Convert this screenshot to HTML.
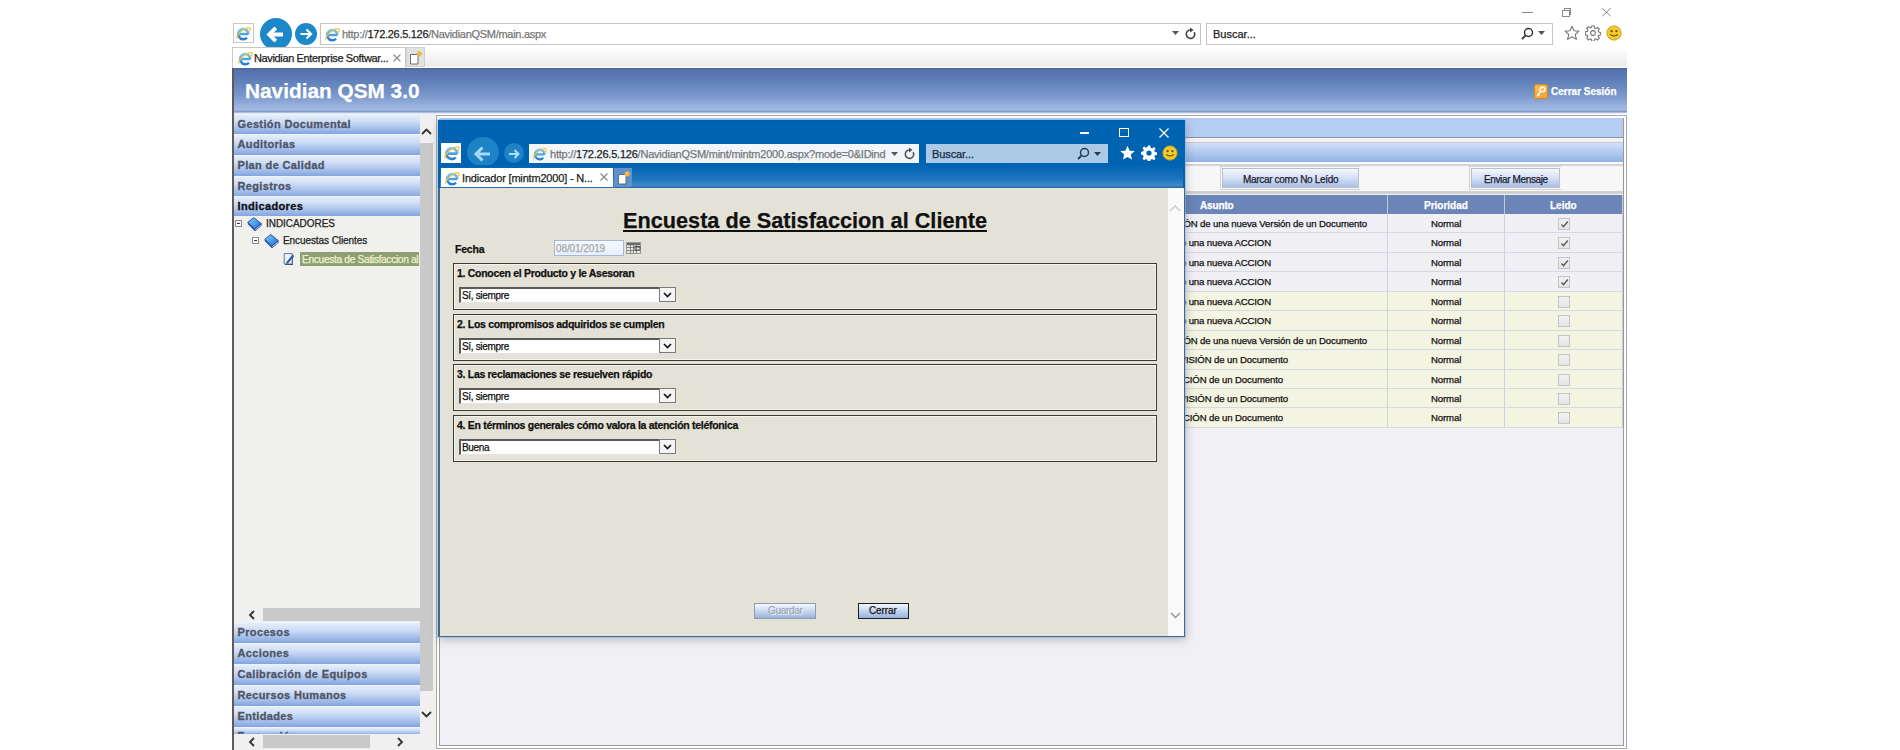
<!DOCTYPE html>
<html><head><meta charset="utf-8">
<style>
*{box-sizing:border-box;margin:0;padding:0}
html,body{width:1900px;height:750px;overflow:hidden;background:#fff;font-family:"Liberation Sans",sans-serif;position:relative}
.a{position:absolute}
.t{position:absolute;white-space:nowrap;line-height:1;-webkit-text-stroke:.25px currentColor}
/* outer chrome */
#chrome{left:232px;top:0;width:1395px;height:68px;background:#fff}
.circ{position:absolute;border-radius:50%;background:#1c87c9}
.box{position:absolute;border:1px solid #c8c8c8;background:#fff}
/* header */
#hdr{left:232px;top:68px;width:1395px;height:46px;background:linear-gradient(#4f638c 0px,#5571b0 2px,#5f7fb8 12px,#7594c8 26px,#a4bae6 42px,#7a92bc 44px,#e2eaf8 45px)}
/* sidebar */
#side{left:232px;top:114px;width:204px;height:636px;background:#f0f0ec}
.acc{position:absolute;left:2px;width:185.5px;height:21px;background:linear-gradient(#e6eefb 0%,#cddcf6 35%,#a6c0ec 70%,#83a4dc 100%);border-top:1px solid #eef3fc;font-weight:bold;font-size:11px;color:#4f5566;padding:3px 0 0 3.5px;letter-spacing:.36px;-webkit-text-stroke:.3px currentColor}
/* main */
#main{left:436px;top:115px;width:1191px;height:634px;border:1px solid #a8a8a8;background:#fff}
#mainin{left:2px;top:2px;width:1185px;height:628px;border:1px solid #999;background:#f1f1f5}
/* popup */
#pop{left:438px;top:120px;width:747px;height:517px;background:#43688f;box-shadow:0 0 0 1px rgba(140,185,230,.55),1px 3px 9px rgba(40,40,60,.28)}
</style></head>
<body>
<!-- outer IE chrome -->

<div id="chrome" class="a">
  <!-- window controls -->
  <div class="a" style="left:1290px;top:12px;width:11px;height:1px;background:#8a8a8a"></div>
  <div class="a" style="left:1331.5px;top:8px;width:7.5px;height:7px;border:1px solid #888"></div>
  <div class="a" style="left:1330px;top:9.5px;width:7.5px;height:7px;border:1px solid #888;background:#fff"></div>
  <svg class="a" style="left:1370px;top:8px" width="9" height="8.5" viewBox="0 0 9 8.5"><path d="M.3 .3l8.4 7.9M8.7 .3L.3 8.2" stroke="#888" stroke-width="1"/></svg>
  <!-- ie box -->
  <div class="box" style="left:1px;top:23px;width:21px;height:20px"></div>
  <svg class="a" style="left:3px;top:25px" width="16" height="16" viewBox="0 0 16 16"><defs><linearGradient id="ieg1" x1="0" y1="0" x2="0" y2="1"><stop offset="0" stop-color="#74c4f6"/><stop offset="1" stop-color="#2a7ed0"/></linearGradient></defs>
   <path d="M3.2 9H13.4M13.4 9A5.1 5.1 0 1 0 12 12.6" fill="none" stroke="url(#ieg1)" stroke-width="2.5"/>
   <path d="M2.2 13.6C0.6 12.2 3.5 7.6 8.2 4.8C11.4 2.9 14.2 2.2 15 3.2C15.6 4 14.8 5.6 13.2 7.2" fill="none" stroke="#f0c43a" stroke-width="1.2"/></svg>
  <!-- back/fwd -->
  <div class="circ" style="left:27.5px;top:18px;width:32px;height:32px"></div>
  <svg class="a" style="left:27px;top:17.5px" width="33" height="33" viewBox="0 0 33 33"><path d="M9.5 16.5h14.5M16.8 9.8l-6.7 6.7 6.7 6.7" fill="none" stroke="#fff" stroke-width="3.8"/></svg>
  <div class="circ" style="left:63px;top:23px;width:22px;height:22px"></div>
  <svg class="a" style="left:63px;top:23px" width="22" height="22" viewBox="0 0 22 22"><path d="M5.5 11h10.5M11.5 6.5l4.5 4.5-4.5 4.5" fill="none" stroke="#fff" stroke-width="2.2"/></svg>
  <!-- address -->
  <div class="box" style="left:88px;top:23px;width:881px;height:22px;border-color:#c4c4c4"></div>
  <svg class="a" style="left:92px;top:26px" width="16" height="16" viewBox="0 0 16 16"><defs><linearGradient id="ieg2" x1="0" y1="0" x2="0" y2="1"><stop offset="0" stop-color="#74c4f6"/><stop offset="1" stop-color="#2a7ed0"/></linearGradient></defs>
   <path d="M3.2 9H13.4M13.4 9A5.1 5.1 0 1 0 12 12.6" fill="none" stroke="url(#ieg2)" stroke-width="2.5"/>
   <path d="M2.2 13.6C0.6 12.2 3.5 7.6 8.2 4.8C11.4 2.9 14.2 2.2 15 3.2C15.6 4 14.8 5.6 13.2 7.2" fill="none" stroke="#f0c43a" stroke-width="1.2"/></svg>
  <div class="t" style="left:110px;top:29px;font-size:11px;color:#777;letter-spacing:-.29px">http://<span style="color:#222">172.26.5.126</span>/NavidianQSM/main.aspx</div>
  <svg class="a" style="left:940px;top:31px" width="7" height="5"><path d="M0 0h7L3.5 4z" fill="#555"/></svg>
  <svg class="a" style="left:952px;top:27px" width="13" height="13" viewBox="0 0 13 13"><path d="M10.2 5.2A4.2 4.2 0 1 1 6.3 3" fill="none" stroke="#444" stroke-width="1.6"/><path d="M6 .4L9.6 3 6 5.6Z" fill="#444"/></svg>
  <!-- search -->
  <div class="box" style="left:974px;top:23px;width:347px;height:22px;border-color:#c4c4c4"></div>
  <div class="t" style="left:981px;top:29px;font-size:11px;color:#222">Buscar...</div>
  <svg class="a" style="left:1289px;top:27px" width="13" height="13" viewBox="0 0 13 13"><circle cx="7.5" cy="5.5" r="4" fill="none" stroke="#333" stroke-width="1.5"/><path d="M4.7 8.3L1 12" stroke="#333" stroke-width="1.8"/></svg>
  <svg class="a" style="left:1306px;top:31px" width="7" height="5"><path d="M0 0h7L3.5 4z" fill="#555"/></svg>
  <!-- star gear smiley -->
  <svg class="a" style="left:1332px;top:25px;color:#777" width="16" height="16" viewBox="0 0 16 16"><path d="M8 1.2l2 4.6 5 .4-3.8 3.3 1.2 4.9L8 11.8l-4.4 2.6 1.2-4.9L1 6.2l5-.4Z" fill="none" stroke="currentColor" stroke-width="1.1" stroke-linejoin="round"/></svg>
  <svg class="a" style="left:1353px;top:25px;color:#777" width="16" height="16" viewBox="0 0 16 16"><path d="M6.8 1h2.4l.4 2 1.3.6 1.7-1.2 1.7 1.7-1.2 1.7.6 1.3 2 .4v2.4l-2 .4-.6 1.3 1.2 1.7-1.7 1.7-1.7-1.2-1.3.6-.4 2H6.8l-.4-2-1.3-.6-1.7 1.2-1.7-1.7 1.2-1.7-.6-1.3-2-.4V6.8l2-.4.6-1.3-1.2-1.7 1.7-1.7 1.7 1.2 1.3-.6Z" fill="none" stroke="currentColor" stroke-width="1.1"/>
   <circle cx="8" cy="8" r="2.4" fill="none" stroke="currentColor" stroke-width="1.1"/></svg>
  <svg class="a" style="left:1374px;top:25px" width="16" height="16" viewBox="0 0 16 16"><circle cx="8" cy="8" r="7.1" fill="#f2cc2c" stroke="#c8a020" stroke-width="1"/>
   <circle cx="5.6" cy="6.2" r="1.1" fill="#6a4a00"/><circle cx="10.4" cy="6.2" r="1.1" fill="#6a4a00"/>
   <path d="M4.3 9.3C5.3 11.6 10.7 11.6 11.7 9.3" fill="none" stroke="#6a4a00" stroke-width="1.1"/></svg>
  <!-- tab row -->
  <div class="a" style="left:193px;top:47px;width:1202px;height:21px;background:linear-gradient(#fff,#ebebeb 19px,#fafafa 20px)"></div>
  <div class="a" style="left:0;top:47px;width:174px;height:21px;border:1px solid #c8c8c8;border-bottom:0;background:#fff"></div>
  <svg class="a" style="left:5px;top:50px" width="16" height="16" viewBox="0 0 16 16"><defs><linearGradient id="ieg6" x1="0" y1="0" x2="0" y2="1"><stop offset="0" stop-color="#74c4f6"/><stop offset="1" stop-color="#2a7ed0"/></linearGradient></defs>
   <path d="M3.2 9H13.4M13.4 9A5.1 5.1 0 1 0 12 12.6" fill="none" stroke="url(#ieg6)" stroke-width="2.5"/>
   <path d="M2.2 13.6C0.6 12.2 3.5 7.6 8.2 4.8C11.4 2.9 14.2 2.2 15 3.2C15.6 4 14.8 5.6 13.2 7.2" fill="none" stroke="#f0c43a" stroke-width="1.2"/></svg>
  <div class="t" style="left:22px;top:53px;font-size:11px;color:#222;letter-spacing:-.36px">Navidian Enterprise Softwar...</div>
  <svg class="a" style="left:161px;top:54px" width="8" height="8" viewBox="0 0 8 8"><path d="M.5 .5l7 7M7.5 .5l-7 7" stroke="#8a8a8a" stroke-width="1.1"/></svg>
  <div class="a" style="left:174px;top:47px;width:19px;height:20px;background:#e2e2e2;border:1px solid #cfcfcf"></div>
  <svg class="a" style="left:177px;top:50px" width="14" height="16" viewBox="0 0 14 16"><path d="M1.5 4.5h7.5v9.5h-7.5z" fill="#fff" stroke="#606060" stroke-width=".9"/>
   <circle cx="10.2" cy="3.8" r="2.6" fill="#f0b848"/></svg>
</div>

<!-- header -->
<div id="hdr" class="a">
  <div class="t" style="left:13px;top:12.5px;font-size:20.8px;font-weight:bold;color:#fff">Navidian QSM 3.0</div>
  <svg class="a" style="left:1302px;top:16px" width="14" height="15" viewBox="0 0 14 15"><rect x=".5" y=".5" width="13" height="14" rx="1.5" fill="#f2a93a" stroke="#d88a20"/><rect x="1.5" y="1.5" width="11" height="6" fill="#f8c870" opacity=".6"/><circle cx="8.5" cy="5.5" r="2.4" fill="none" stroke="#fff" stroke-width="1.3"/><path d="M7 7.2L3 11.5M4.2 10.2l1.3 1.3M3.2 11.2l1 1" stroke="#fff" stroke-width="1.3"/></svg>
  <div class="t" style="left:1319px;top:19px;font-size:10px;font-weight:bold;color:#fff">Cerrar Sesión</div>
</div>

<!-- sidebar -->
<div id="side" class="a">
  <div class="a" style="left:0;top:-46px;width:1.7px;height:682px;background:#5c5c5c;z-index:5"></div>
  <div class="acc" style="top:0;height:20px">Gestión Documental</div>
  <div class="acc" style="top:20px">Auditorias</div>
  <div class="acc" style="top:41px">Plan de Calidad</div>
  <div class="acc" style="top:62px">Registros</div>
  <div class="acc" style="top:82px;height:20px;color:#111">Indicadores</div>
  <!-- tree -->
  <div class="a" style="left:3px;top:106px;width:7px;height:7px;border:1px solid #8a8aa8;background:#fff"><div class="a" style="left:1px;top:2px;width:3px;height:1px;background:#333"></div></div>
  <svg class="a" style="left:15px;top:103px" width="15" height="14" viewBox="0 0 15 14"><defs><linearGradient id="bk1" x1="0" y1="0" x2="1" y2="1"><stop offset="0" stop-color="#86d0fa"/><stop offset="1" stop-color="#1c6ad4"/></linearGradient></defs><path d="M.8 5.2L7.8 12.6V14L.8 6.9Z" fill="#0c3494"/><path d="M7.8 12.2L14.2 6.6V8.6L7.8 14Z" fill="#fff" stroke="#0c3494" stroke-width=".8" stroke-linejoin="round"/><path d="M.8 5.2L6.8.6 14.2 6.6 7.8 12.2Z" fill="url(#bk1)" stroke="#0c3494" stroke-width=".8" stroke-linejoin="round"/></svg>
  <div class="t" style="left:34px;top:105px;font-size:10px;color:#222;letter-spacing:-.05px">INDICADORES</div>
  <div class="a" style="left:20px;top:123px;width:7px;height:7px;border:1px solid #8a8aa8;background:#fff"><div class="a" style="left:1px;top:2px;width:3px;height:1px;background:#333"></div></div>
  <svg class="a" style="left:32px;top:120px" width="15" height="14" viewBox="0 0 15 14"><defs><linearGradient id="bk2" x1="0" y1="0" x2="1" y2="1"><stop offset="0" stop-color="#86d0fa"/><stop offset="1" stop-color="#1c6ad4"/></linearGradient></defs><path d="M.8 5.2L7.8 12.6V14L.8 6.9Z" fill="#0c3494"/><path d="M7.8 12.2L14.2 6.6V8.6L7.8 14Z" fill="#fff" stroke="#0c3494" stroke-width=".8" stroke-linejoin="round"/><path d="M.8 5.2L6.8.6 14.2 6.6 7.8 12.2Z" fill="url(#bk2)" stroke="#0c3494" stroke-width=".8" stroke-linejoin="round"/></svg>
  <div class="t" style="left:51px;top:122px;font-size:10px;color:#222;letter-spacing:-.08px">Encuestas Clientes</div>
  <svg class="a" style="left:51px;top:138px" width="13" height="14" viewBox="0 0 13 14"><path d="M2 2.5h8v10.5h-8z" fill="#3a4a66"/><path d="M1.2 1.5h8v10.5h-8z" fill="#e6f2fa" stroke="#5a6a88" stroke-width=".9"/><path d="M3.5 10l6.2-7.2 1.6 1.3-6.2 7.2-1.9.6z" fill="#1e56b0"/></svg>
  <div class="a" style="left:68px;top:138px;width:119px;height:14px;background:#8f9f74;overflow:hidden"><div class="t" style="left:2px;top:2.5px;font-size:10.3px;color:#eef4cc;letter-spacing:-.38px">Encuesta de Satisfaccion al</div></div>
  <!-- tree hscroll -->
  <div class="a" style="left:2px;top:494px;width:186px;height:14px;background:#f0f0f0"></div>
  <div class="a" style="left:31px;top:494px;width:156.5px;height:13px;background:#c9c9c9"></div>
  <svg class="a" style="left:16px;top:496px" width="8" height="10" viewBox="0 0 8 10"><path d="M6 1L2 5l4 4" fill="none" stroke="#333" stroke-width="1.8"/></svg>
  <div class="acc" style="top:508px">Procesos</div>
  <div class="acc" style="top:529px">Acciones</div>
  <div class="acc" style="top:550px">Calibración de Equipos</div>
  <div class="acc" style="top:571px">Recursos Humanos</div>
  <div class="acc" style="top:592px">Entidades</div>
  <div class="acc" style="top:613px;height:8px;overflow:hidden;padding-top:2px">Formación</div>
  <!-- bottom hscroll -->
  <div class="a" style="left:1px;top:620px;width:202px;height:16px;background:#f0f0f0"></div>
  <div class="a" style="left:31px;top:621px;width:107px;height:13px;background:#c9c9c9"></div>
  <svg class="a" style="left:16px;top:623px" width="8" height="10" viewBox="0 0 8 10"><path d="M6 1L2 5l4 4" fill="none" stroke="#333" stroke-width="1.8"/></svg>
  <svg class="a" style="left:164px;top:623px" width="8" height="10" viewBox="0 0 8 10"><path d="M2 1l4 4-4 4" fill="none" stroke="#333" stroke-width="1.8"/></svg>
  <!-- vscroll -->
  <div class="a" style="left:188px;top:0;width:13px;height:620px;background:#f0f0f0"></div>
  <div class="a" style="left:188px;top:29px;width:13px;height:548px;background:#c9c9c9"></div>
  <svg class="a" style="left:189px;top:14px" width="11" height="7" viewBox="0 0 11 7"><path d="M1 6l4.5-4.5L10 6" fill="none" stroke="#333" stroke-width="1.8"/></svg>
  <svg class="a" style="left:189px;top:597px" width="11" height="7" viewBox="0 0 11 7"><path d="M1 1l4.5 4.5L10 1" fill="none" stroke="#333" stroke-width="1.8"/></svg>
</div>

<!-- main content -->
<div id="main" class="a"><div id="mainin" class="a"></div></div>
<div class="a" style="left:439px;top:118px;width:1184px;height:20px;background:#b5cdf0;border-bottom:1px solid #8d8f9e"></div>
<div class="a" style="left:439px;top:138px;width:1184px;height:5px;background:#f2f2f4;border-bottom:1px solid #c8c8cc"></div>
<div class="a" style="left:439px;top:143px;width:1184px;height:19px;background:linear-gradient(#d2e0f8,#b4cbf0 45%,#90b2e8)"></div>
<div class="a" style="left:439px;top:162px;width:1184px;height:4px;background:#fafafa;border-bottom:2px solid #d4d4d4"></div>
<div class="a" style="left:439px;top:166px;width:1184px;height:28px;background:#f7f7f7;border-bottom:3px solid #d0d0d0"></div>
<div class="a" style="left:1220px;top:166px;width:140px;height:24px;border:1px solid #d4d4d4;border-right:0"></div>
<div class="a" style="left:1469px;top:166px;width:92px;height:24px;border:1px solid #d4d4d4;border-right:0"></div>
<div class="a" style="left:1222px;top:168px;width:137px;height:20px;border:1px solid #b8c0cc;background:linear-gradient(#f4f7fd,#d4e0f4 50%,#a9c0e6)"></div>
<div class="t" style="left:1243px;top:175px;font-size:10px;letter-spacing:-.33px;color:#1a2030">Marcar como No Leído</div>
<div class="a" style="left:1471px;top:168px;width:89px;height:20px;border:1px solid #b8c0cc;background:linear-gradient(#f4f7fd,#d4e0f4 50%,#a9c0e6)"></div>
<div class="t" style="left:1484px;top:175px;font-size:10px;letter-spacing:-.37px;color:#1a2030">Enviar Mensaje</div>
<div class="a" style="left:440px;top:195px;width:1183px;height:19px;background:#6b85b8"></div>
<div class="a" style="left:1387px;top:195px;width:1px;height:233px;background:#c2cadb"></div>
<div class="a" style="left:1504px;top:195px;width:1px;height:233px;background:#c2cadb"></div>
<div class="t" style="left:1200px;top:200.5px;font-size:10px;font-weight:bold;color:#fff;letter-spacing:-.15px">Asunto</div>
<div class="t" style="left:1424px;top:200.5px;font-size:10px;font-weight:bold;color:#fff">Prioridad</div>
<div class="t" style="left:1550px;top:200.5px;font-size:10px;font-weight:bold;color:#fff">Leido</div>
<div class="a" style="left:440px;top:214px;width:1183px;height:19px;background:#efeff4;border-bottom:1px solid #d6d9e3"></div>
<div class="t" style="right:533px;top:219px;font-size:9.6px;letter-spacing:-.12px;color:#111">Notificación de REVISIÓN de una nueva Versión de un Documento</div>
<div class="t" style="left:1431px;top:219px;font-size:9.6px;letter-spacing:-.12px;color:#111">Normal</div>
<div class="a" style="left:1558px;top:218px;width:12px;height:12px;border:1px solid #c4c4c4;background:linear-gradient(#f2f2f2,#e4e4e4)"><svg class="a" style="left:1px;top:1px" width="9" height="9" viewBox="0 0 9 9"><path d="M1.5 4.5l2 2.2L7.8 1.5" fill="none" stroke="#555" stroke-width="1.3"/></svg></div>
<div class="a" style="left:440px;top:233px;width:1183px;height:20px;background:#efeff4;border-bottom:1px solid #d6d9e3"></div>
<div class="t" style="right:629px;top:238px;font-size:9.6px;letter-spacing:-.12px;color:#111">Asignado una nueva ACCION</div>
<div class="t" style="left:1431px;top:238px;font-size:9.6px;letter-spacing:-.12px;color:#111">Normal</div>
<div class="a" style="left:1558px;top:237px;width:12px;height:12px;border:1px solid #c4c4c4;background:linear-gradient(#f2f2f2,#e4e4e4)"><svg class="a" style="left:1px;top:1px" width="9" height="9" viewBox="0 0 9 9"><path d="M1.5 4.5l2 2.2L7.8 1.5" fill="none" stroke="#555" stroke-width="1.3"/></svg></div>
<div class="a" style="left:440px;top:253px;width:1183px;height:19px;background:#efeff4;border-bottom:1px solid #d6d9e3"></div>
<div class="t" style="right:629px;top:258px;font-size:9.6px;letter-spacing:-.12px;color:#111">Asignado una nueva ACCION</div>
<div class="t" style="left:1431px;top:258px;font-size:9.6px;letter-spacing:-.12px;color:#111">Normal</div>
<div class="a" style="left:1558px;top:257px;width:12px;height:12px;border:1px solid #c4c4c4;background:linear-gradient(#f2f2f2,#e4e4e4)"><svg class="a" style="left:1px;top:1px" width="9" height="9" viewBox="0 0 9 9"><path d="M1.5 4.5l2 2.2L7.8 1.5" fill="none" stroke="#555" stroke-width="1.3"/></svg></div>
<div class="a" style="left:440px;top:272px;width:1183px;height:20px;background:#efeff4;border-bottom:1px solid #d6d9e3"></div>
<div class="t" style="right:629px;top:277px;font-size:9.6px;letter-spacing:-.12px;color:#111">Asignado una nueva ACCION</div>
<div class="t" style="left:1431px;top:277px;font-size:9.6px;letter-spacing:-.12px;color:#111">Normal</div>
<div class="a" style="left:1558px;top:276px;width:12px;height:12px;border:1px solid #c4c4c4;background:linear-gradient(#f2f2f2,#e4e4e4)"><svg class="a" style="left:1px;top:1px" width="9" height="9" viewBox="0 0 9 9"><path d="M1.5 4.5l2 2.2L7.8 1.5" fill="none" stroke="#555" stroke-width="1.3"/></svg></div>
<div class="a" style="left:440px;top:292px;width:1183px;height:19px;background:#f4f4e2;border-bottom:1px solid #d6d9e3"></div>
<div class="t" style="right:629px;top:297px;font-size:9.6px;letter-spacing:-.12px;color:#111">Asignado una nueva ACCION</div>
<div class="t" style="left:1431px;top:297px;font-size:9.6px;letter-spacing:-.12px;color:#111">Normal</div>
<div class="a" style="left:1558px;top:296px;width:12px;height:12px;border:1px solid #c4c4c4;background:linear-gradient(#f2f2f2,#e4e4e4)"></div>
<div class="a" style="left:440px;top:311px;width:1183px;height:20px;background:#f4f4e2;border-bottom:1px solid #d6d9e3"></div>
<div class="t" style="right:629px;top:316px;font-size:9.6px;letter-spacing:-.12px;color:#111">Asignado una nueva ACCION</div>
<div class="t" style="left:1431px;top:316px;font-size:9.6px;letter-spacing:-.12px;color:#111">Normal</div>
<div class="a" style="left:1558px;top:315px;width:12px;height:12px;border:1px solid #c4c4c4;background:linear-gradient(#f2f2f2,#e4e4e4)"></div>
<div class="a" style="left:440px;top:331px;width:1183px;height:19px;background:#f4f4e2;border-bottom:1px solid #d6d9e3"></div>
<div class="t" style="right:533px;top:336px;font-size:9.6px;letter-spacing:-.12px;color:#111">Notificación de REVISIÓN de una nueva Versión de un Documento</div>
<div class="t" style="left:1431px;top:336px;font-size:9.6px;letter-spacing:-.12px;color:#111">Normal</div>
<div class="a" style="left:1558px;top:335px;width:12px;height:12px;border:1px solid #c4c4c4;background:linear-gradient(#f2f2f2,#e4e4e4)"></div>
<div class="a" style="left:440px;top:350px;width:1183px;height:20px;background:#f4f4e2;border-bottom:1px solid #d6d9e3"></div>
<div class="t" style="right:612px;top:355px;font-size:9.6px;letter-spacing:-.12px;color:#111">Pendiente de REVISIÓN de un Documento</div>
<div class="t" style="left:1431px;top:355px;font-size:9.6px;letter-spacing:-.12px;color:#111">Normal</div>
<div class="a" style="left:1558px;top:354px;width:12px;height:12px;border:1px solid #c4c4c4;background:linear-gradient(#f2f2f2,#e4e4e4)"></div>
<div class="a" style="left:440px;top:370px;width:1183px;height:19px;background:#f4f4e2;border-bottom:1px solid #d6d9e3"></div>
<div class="t" style="right:617px;top:375px;font-size:9.6px;letter-spacing:-.12px;color:#111">Pendiente de APROBACIÓN de un Documento</div>
<div class="t" style="left:1431px;top:375px;font-size:9.6px;letter-spacing:-.12px;color:#111">Normal</div>
<div class="a" style="left:1558px;top:374px;width:12px;height:12px;border:1px solid #c4c4c4;background:linear-gradient(#f2f2f2,#e4e4e4)"></div>
<div class="a" style="left:440px;top:389px;width:1183px;height:19px;background:#f4f4e2;border-bottom:1px solid #d6d9e3"></div>
<div class="t" style="right:612px;top:394px;font-size:9.6px;letter-spacing:-.12px;color:#111">Pendiente de REVISIÓN de un Documento</div>
<div class="t" style="left:1431px;top:394px;font-size:9.6px;letter-spacing:-.12px;color:#111">Normal</div>
<div class="a" style="left:1558px;top:393px;width:12px;height:12px;border:1px solid #c4c4c4;background:linear-gradient(#f2f2f2,#e4e4e4)"></div>
<div class="a" style="left:440px;top:408px;width:1183px;height:20px;background:#f4f4e2;border-bottom:1px solid #d6d9e3"></div>
<div class="t" style="right:617px;top:413px;font-size:9.6px;letter-spacing:-.12px;color:#111">Pendiente de APROBACIÓN de un Documento</div>
<div class="t" style="left:1431px;top:413px;font-size:9.6px;letter-spacing:-.12px;color:#111">Normal</div>
<div class="a" style="left:1558px;top:412px;width:12px;height:12px;border:1px solid #c4c4c4;background:linear-gradient(#f2f2f2,#e4e4e4)"></div>
<div class="a" style="left:1387px;top:214px;width:1px;height:214px;background:#ccd2e0"></div>
<div class="a" style="left:1504px;top:214px;width:1px;height:214px;background:#ccd2e0"></div>
<div class="a" style="left:1622px;top:195px;width:1px;height:233px;background:#c8cbd6"></div>

<!-- popup -->
<div id="pop" class="a"></div>
<div class="a" style="left:438px;top:120px;width:747px;height:68px;background:linear-gradient(#0a50a0,#0063b1 1px)"></div>
<!-- popup chrome -->
<div class="a" style="left:1080px;top:132px;width:9px;height:1.5px;background:#fff"></div>
<div class="a" style="left:1119px;top:128px;width:10px;height:9px;border:1.5px solid #fff"></div>
<svg class="a" style="left:1159px;top:128px" width="10" height="10" viewBox="0 0 10 10"><path d="M.5 .5l9 9M9.5 .5l-9 9" stroke="#fff" stroke-width="1.3"/></svg>
<div class="a" style="left:440.5px;top:142.5px;width:20.5px;height:20.5px;background:#fff"></div>
<svg class="a" style="left:443px;top:144px" width="17" height="17" viewBox="0 0 16 16"><defs><linearGradient id="ieg8" x1="0" y1="0" x2="0" y2="1"><stop offset="0" stop-color="#74c4f6"/><stop offset="1" stop-color="#2a7ed0"/></linearGradient></defs>
   <path d="M3.2 9H13.4M13.4 9A5.1 5.1 0 1 0 12 12.6" fill="none" stroke="url(#ieg8)" stroke-width="2.5"/>
   <path d="M2.2 13.6C0.6 12.2 3.5 7.6 8.2 4.8C11.4 2.9 14.2 2.2 15 3.2C15.6 4 14.8 5.6 13.2 7.2" fill="none" stroke="#f0c43a" stroke-width="1.2"/></svg>
<div class="a" style="left:467px;top:137px;width:32px;height:30px;border-radius:50%;background:#1e82c6"></div>
<svg class="a" style="left:467px;top:139px" width="32" height="30" viewBox="0 0 32 30"><path d="M9 15h14M15.5 8.5L9 15l6.5 6.5" fill="none" stroke="#a8d8f8" stroke-width="3"/></svg>
<div class="a" style="left:504px;top:143px;width:20px;height:20px;border-radius:50%;background:#1e82c6"></div>
<svg class="a" style="left:504px;top:144px" width="20" height="20" viewBox="0 0 20 20"><path d="M5 10h9.5M10.5 6l4 4-4 4" fill="none" stroke="#aee0ff" stroke-width="2"/></svg>
<div class="a" style="left:529px;top:144px;width:390px;height:19px;background:#f2f6fb"></div>
<svg class="a" style="left:532px;top:146px" width="15" height="15" viewBox="0 0 16 16"><defs><linearGradient id="ieg9" x1="0" y1="0" x2="0" y2="1"><stop offset="0" stop-color="#74c4f6"/><stop offset="1" stop-color="#2a7ed0"/></linearGradient></defs>
   <path d="M3.2 9H13.4M13.4 9A5.1 5.1 0 1 0 12 12.6" fill="none" stroke="url(#ieg9)" stroke-width="2.5"/>
   <path d="M2.2 13.6C0.6 12.2 3.5 7.6 8.2 4.8C11.4 2.9 14.2 2.2 15 3.2C15.6 4 14.8 5.6 13.2 7.2" fill="none" stroke="#f0c43a" stroke-width="1.2"/></svg>
<div class="t" style="left:550px;top:149px;font-size:11px;color:#777;letter-spacing:-.22px">http://<span style="color:#222">172.26.5.126</span>/NavidianQSM/mint/mintm2000.aspx?mode=0&amp;IDind</div>
<svg class="a" style="left:891px;top:152px" width="7" height="5"><path d="M0 0h7L3.5 4z" fill="#555"/></svg>
<svg class="a" style="left:903px;top:147px" width="13" height="13" viewBox="0 0 13 13"><path d="M10.2 5.2A4.2 4.2 0 1 1 6.3 3" fill="none" stroke="#555" stroke-width="1.6"/><path d="M6 .4L9.6 3 6 5.6Z" fill="#555"/></svg>
<div class="a" style="left:926px;top:144px;width:182px;height:19px;background:#aacae8"></div>
<div class="t" style="left:932px;top:149px;font-size:11px;color:#1a2a3a;letter-spacing:-.1px">Buscar...</div>
<svg class="a" style="left:1077px;top:147px" width="13" height="13" viewBox="0 0 13 13"><circle cx="7.5" cy="5.5" r="4" fill="none" stroke="#2a3a4a" stroke-width="1.5"/><path d="M4.7 8.3L1 12" stroke="#2a3a4a" stroke-width="1.8"/></svg>
<svg class="a" style="left:1094px;top:152px" width="7" height="5"><path d="M0 0h7L3.5 4z" fill="#2a3a4a"/></svg>
<svg class="a" style="left:1119px;top:145px" width="17" height="16" viewBox="0 0 16 16"><path d="M8 .8l2.1 4.9 5.2.4-4 3.4 1.3 5.1L8 11.9l-4.6 2.7 1.3-5.1-4-3.4 5.2-.4Z" fill="#fff"/></svg>
<svg class="a" style="left:1141px;top:145px;color:#fff" width="16" height="16" viewBox="0 0 16 16"><path d="M6.8 .6h2.4l.4 2.1 1.5.7 1.8-1.3 1.7 1.7-1.3 1.8.7 1.5 2.1.4v2.4l-2.1.4-.7 1.5 1.3 1.8-1.7 1.7-1.8-1.3-1.5.7-.4 2.1H6.8l-.4-2.1-1.5-.7-1.8 1.3-1.7-1.7 1.3-1.8-.7-1.5L0 9.2V6.8l2.1-.4.7-1.5-1.3-1.8 1.7-1.7 1.8 1.3 1.5-.7Z" fill="#fff"/><circle cx="8" cy="8" r="2.6" fill="#0063b1"/></svg>
<svg class="a" style="left:1162px;top:145px" width="16" height="16" viewBox="0 0 16 16"><circle cx="8" cy="8" r="7.1" fill="#f2cc2c" stroke="#c8a020" stroke-width="1"/>
   <circle cx="5.6" cy="6.2" r="1.1" fill="#6a4a00"/><circle cx="10.4" cy="6.2" r="1.1" fill="#6a4a00"/>
   <path d="M4.3 9.3C5.3 11.6 10.7 11.6 11.7 9.3" fill="none" stroke="#6a4a00" stroke-width="1.1"/></svg>
<!-- popup tab row -->
<div class="a" style="left:440px;top:165px;width:743px;height:23px;background:linear-gradient(#0063b1,#1e74bd 60%,#3f8acb 21px,#2a6cb0 22px)"></div>
<div class="a" style="left:441px;top:168px;width:172px;height:19px;background:#fff"></div>
<svg class="a" style="left:444px;top:170px" width="16" height="16" viewBox="0 0 16 16"><defs><linearGradient id="ieg11" x1="0" y1="0" x2="0" y2="1"><stop offset="0" stop-color="#74c4f6"/><stop offset="1" stop-color="#2a7ed0"/></linearGradient></defs>
   <path d="M3.2 9H13.4M13.4 9A5.1 5.1 0 1 0 12 12.6" fill="none" stroke="url(#ieg11)" stroke-width="2.5"/>
   <path d="M2.2 13.6C0.6 12.2 3.5 7.6 8.2 4.8C11.4 2.9 14.2 2.2 15 3.2C15.6 4 14.8 5.6 13.2 7.2" fill="none" stroke="#f0c43a" stroke-width="1.2"/></svg>
<div class="t" style="left:462px;top:173px;font-size:11px;color:#222;letter-spacing:-.18px">Indicador [mintm2000] - N...</div>
<svg class="a" style="left:600px;top:173px" width="8" height="8" viewBox="0 0 8 8"><path d="M.5 .5l7 7M7.5 .5l-7 7" stroke="#888" stroke-width="1.2"/></svg>
<div class="a" style="left:614px;top:168px;width:18px;height:19px;background:#5e92cc"></div>
<svg class="a" style="left:617px;top:170px" width="14" height="16" viewBox="0 0 14 16"><path d="M1.5 4.5h7.5v9.5h-7.5z" fill="#fff" stroke="#606060" stroke-width=".9"/>
   <circle cx="10.2" cy="3.8" r="2.6" fill="#f0b848"/></svg>
<!-- popup content -->
<div class="a" style="left:439.5px;top:188px;width:728.5px;height:447.5px;background:#e4e2d6"></div>
<div class="a" style="left:1168px;top:188px;width:16px;height:447.5px;background:#fafafa"></div>
<svg class="a" style="left:1169px;top:204px" width="12" height="8" viewBox="0 0 12 8"><path d="M1 7l5-5 5 5" fill="none" stroke="#d0d0d0" stroke-width="1.6"/></svg>
<svg class="a" style="left:1170px;top:612px" width="11" height="7" viewBox="0 0 11 7"><path d="M1 1l4.5 4.5L10 1" fill="none" stroke="#9a9a9a" stroke-width="1.5"/></svg>
<div class="t" style="left:623px;top:210px;font-size:21.7px;font-weight:bold;color:#111;text-decoration:underline;text-decoration-thickness:1.5px;text-underline-offset:2px">Encuesta de Satisfaccion al Cliente</div>
<div class="t" style="left:455px;top:244px;font-size:10.5px;font-weight:bold;color:#111;letter-spacing:-.2px">Fecha</div>
<div class="a" style="left:554px;top:240px;width:70px;height:16px;border:1px solid #a4b8d8;background:linear-gradient(#f6f9fe,#e8f0fc)"></div>
<div class="t" style="left:556px;top:244px;font-size:10px;color:#a8a8a8;letter-spacing:-.1px">08/01/2019</div>
<svg class="a" style="left:626px;top:242px" width="15" height="12" viewBox="0 0 15 12"><rect x=".5" y=".5" width="14" height="11" fill="#e6e6e2" stroke="#9a9a9a"/><rect x="1" y="1" width="13" height="2.2" fill="#6a6a6a"/><path d="M1 5.5h13M1 8.5h13M4.5 3v8.5M7.5 3v8.5M10.5 3v8.5" stroke="#7a7a7a" stroke-width=".9"/><rect x="9" y="4.5" width="5" height="3.5" fill="none" stroke="#555" stroke-width="1"/></svg>
<div class="a" style="left:453px;top:263px;width:704px;height:47px">
 <div class="a" style="left:0;top:0;width:704px;height:47px;border:1px solid #3a3a32;box-shadow:inset 0 0 0 1px #f6f4ec"></div>
 <div class="t" style="left:4px;top:5px;font-size:10.5px;font-weight:bold;color:#111;letter-spacing:-.3px">1. Conocen el Producto y le Asesoran</div>
 <div class="a" style="left:6px;top:24px;width:217px;height:16px;background:#fff;border-top:2px solid #5a5a5a;border-left:2px solid #5a5a5a;border-bottom:1px solid #e4e4e4"></div>
 <div class="t" style="left:9px;top:28px;font-size:10px;color:#111;letter-spacing:-.33px">Sí, siempre</div>
 <div class="a" style="left:206px;top:24px;width:17px;height:15px;background:#f4f4f4;border:1px solid #7a7a7a"></div>
 <svg class="a" style="left:210px;top:29px" width="9" height="6" viewBox="0 0 9 6"><path d="M1 1l3.5 3.5L8 1" fill="none" stroke="#111" stroke-width="1.6"/></svg>
</div>
<div class="a" style="left:453px;top:314px;width:704px;height:47px">
 <div class="a" style="left:0;top:0;width:704px;height:47px;border:1px solid #3a3a32;box-shadow:inset 0 0 0 1px #f6f4ec"></div>
 <div class="t" style="left:4px;top:5px;font-size:10.5px;font-weight:bold;color:#111;letter-spacing:-.3px">2. Los compromisos adquiridos se cumplen</div>
 <div class="a" style="left:6px;top:24px;width:217px;height:16px;background:#fff;border-top:2px solid #5a5a5a;border-left:2px solid #5a5a5a;border-bottom:1px solid #e4e4e4"></div>
 <div class="t" style="left:9px;top:28px;font-size:10px;color:#111;letter-spacing:-.33px">Sí, siempre</div>
 <div class="a" style="left:206px;top:24px;width:17px;height:15px;background:#f4f4f4;border:1px solid #7a7a7a"></div>
 <svg class="a" style="left:210px;top:29px" width="9" height="6" viewBox="0 0 9 6"><path d="M1 1l3.5 3.5L8 1" fill="none" stroke="#111" stroke-width="1.6"/></svg>
</div>
<div class="a" style="left:453px;top:364px;width:704px;height:47px">
 <div class="a" style="left:0;top:0;width:704px;height:47px;border:1px solid #3a3a32;box-shadow:inset 0 0 0 1px #f6f4ec"></div>
 <div class="t" style="left:4px;top:5px;font-size:10.5px;font-weight:bold;color:#111;letter-spacing:-.3px">3. Las reclamaciones se resuelven rápido</div>
 <div class="a" style="left:6px;top:24px;width:217px;height:16px;background:#fff;border-top:2px solid #5a5a5a;border-left:2px solid #5a5a5a;border-bottom:1px solid #e4e4e4"></div>
 <div class="t" style="left:9px;top:28px;font-size:10px;color:#111;letter-spacing:-.33px">Sí, siempre</div>
 <div class="a" style="left:206px;top:24px;width:17px;height:15px;background:#f4f4f4;border:1px solid #7a7a7a"></div>
 <svg class="a" style="left:210px;top:29px" width="9" height="6" viewBox="0 0 9 6"><path d="M1 1l3.5 3.5L8 1" fill="none" stroke="#111" stroke-width="1.6"/></svg>
</div>
<div class="a" style="left:453px;top:415px;width:704px;height:47px">
 <div class="a" style="left:0;top:0;width:704px;height:47px;border:1px solid #3a3a32;box-shadow:inset 0 0 0 1px #f6f4ec"></div>
 <div class="t" style="left:4px;top:5px;font-size:10.5px;font-weight:bold;color:#111;letter-spacing:-.3px">4. En términos generales cómo valora la atención teléfonica</div>
 <div class="a" style="left:6px;top:24px;width:217px;height:16px;background:#fff;border-top:2px solid #5a5a5a;border-left:2px solid #5a5a5a;border-bottom:1px solid #e4e4e4"></div>
 <div class="t" style="left:9px;top:28px;font-size:10px;color:#111;letter-spacing:-.33px">Buena</div>
 <div class="a" style="left:206px;top:24px;width:17px;height:15px;background:#f4f4f4;border:1px solid #7a7a7a"></div>
 <svg class="a" style="left:210px;top:29px" width="9" height="6" viewBox="0 0 9 6"><path d="M1 1l3.5 3.5L8 1" fill="none" stroke="#111" stroke-width="1.6"/></svg>
</div>
<div class="a" style="left:754px;top:603px;width:62px;height:16px;border:1px solid #8d9cb2;background:linear-gradient(#f6f9fe,#c8d8f0 50%,#9ab2da)"></div>
<div class="t" style="left:768px;top:606px;font-size:10px;color:#9ea8ba;letter-spacing:-.3px;text-shadow:1px 1px 0 #f4f6fa">Guardar</div>
<div class="a" style="left:858px;top:603px;width:51px;height:16px;border:1.5px solid #1a1e2a;background:linear-gradient(#f4f7fd,#c4d4f0 50%,#98b2dc)"></div>
<div class="t" style="left:869px;top:606px;font-size:10px;color:#111;letter-spacing:-.1px">Cerrar</div>
</body></html>
